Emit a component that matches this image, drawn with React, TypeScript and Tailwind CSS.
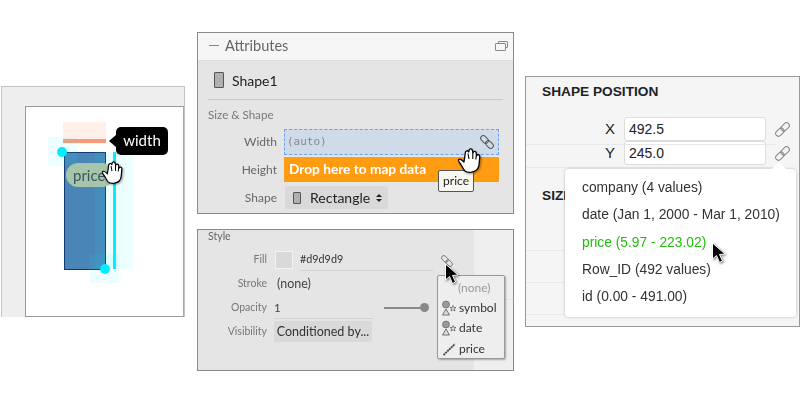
function Hand({ className }: { className: string }) {
  return (
    <svg viewBox="0 0 24 26" className={className}>
      <path
        d="M7 15C5 13 3 11.500 1.700 12.500C.8 13.500 2 15 3.500 17C5 19 6 22 8 24C9.500 25.300 12 25.500 14.500 25.200C18.500 24.500 21.500 22 22 18L22.800 9.500C22.800 7.500 20 7 19.500 9L19.200 6C19 3.800 16.300 3.800 16 5.800L15.400 3.400C14.800 1.200 12 1.500 12 3.800L11.800 5C11 3 8.300 3.500 8.300 6Z"
        fill="#fff"
        stroke="#000"
        strokeWidth="1.300"
        strokeLinejoin="round"
      />
      <path d="M11 6.500L12 12M15.800 5.500L15.800 12M19.300 8.500L18.800 12.500" stroke="#000" strokeWidth="1.100" fill="none" />
    </svg>
  );
}

function Arrow({ className }: { className: string }) {
  return (
    <svg viewBox="0 0 16 22" className={className}>
      <path d="M1.500 1L1.500 17L5.500 13.500L8.500 20.500L11.500 19L8.500 12.500L14 12Z" fill="#000" stroke="#fff" strokeWidth="1" />
    </svg>
  );
}

// flip = chain leaning the other way
function Chain({ flip, color, className }: { flip?: boolean; color: string; className: string }) {
  return (
    <svg viewBox="0 0 16 16" className={className}>
      <g transform={flip ? "rotate(-45 8 8)" : "rotate(45 8 8)"} fill="none" stroke={color} strokeWidth="1.100">
        <rect x="-1" y="5" width="10" height="6" rx="3" />
        <rect x="7" y="5" width="10" height="6" rx="3" />
      </g>
    </svg>
  );
}

function ShapeIcon({ className }: { className: string }) {
  return <div className={`bg-[#b0b0b0] border border-[#555] rounded-[1px] ${className}`}></div>;
}

function DimIcon() {
  return (
    <svg viewBox="0 0 16 16" className="w-[16px] h-[16px] shrink-0">
      <circle cx="5" cy="4.500" r="3.500" fill="#999" stroke="#666" strokeWidth=".7" />
      <path d="M5 9L8.500 15H1.500Z" fill="#ddd" stroke="#555" strokeWidth=".8" />
      <path d="M12 5.500L12.800 7.500H15L13.300 8.800L14 11L12 9.700L10 11L10.700 8.800L9 7.500H11.200Z" fill="#eee" stroke="#555" strokeWidth=".7" />
    </svg>
  );
}

function MeasureIcon() {
  return (
    <svg viewBox="0 0 16 16" className="w-[16px] h-[16px] shrink-0">
      <path d="M2.500 14L14 3" stroke="#444" strokeWidth="1.800" strokeDasharray="2 .6" fill="none" />
    </svg>
  );
}

function CanvasPanel() {
  return (
    <div className="ml-px mt-[86px] w-[184px] h-[231px] bg-[#eeeeee] border-t border-l border-r border-[#c4c4c4] pl-[23px] pt-[19px] font-['Lato',sans-serif]">
      <div className="relative w-full h-[211px] bg-white border border-[#999] border-r-[#aaa] blur-[0.4px]">
        {/* offsets below are relative to (25,106) in the picture */}
        <div className="absolute left-[37px] top-[15px] w-[43px] h-[22px] bg-[#fff0ea]"></div>
        <div className="absolute left-[37px] top-[32px] w-[43px] h-[4px] bg-[#f99a78]"></div>
        <div className="absolute left-[38px] top-[45px] w-[42px] h-[118px] bg-[#4a85b8] border border-[#123a70]"></div>
        <div className="absolute left-[69px] top-[45px] w-[38px] h-[117px] bg-[#00f0ff]/[0.07]"></div>
        <div className="absolute left-[22px] top-[30px] w-[29px] h-[29px] bg-[#00f0ff]/[0.07]"></div>
        <div className="absolute left-[64px] top-[147px] w-[29px] h-[29px] bg-[#00f0ff]/[0.07]"></div>
        <div className="absolute left-[40px] top-[56px] w-[48px] h-[24px] rounded-full bg-[#a6c6ac] text-[#3d5360] text-[15px] leading-[24px] pl-[7px] overflow-hidden">price</div>
        <div className="absolute left-[87px] top-[45px] w-[3px] h-[117px] bg-[#00f0ff]"></div>
        <div className="absolute left-[31px] top-[40px] w-[10px] h-[10px] rounded-full bg-[#00eeff]"></div>
        <div className="absolute left-[74px] top-[157px] w-[10px] h-[10px] rounded-full bg-[#00eeff]"></div>
        <div className="absolute left-[90px] top-[20px] w-[52px] h-[28px] rounded-[5px] bg-black text-white text-[15px] leading-[27px] text-center">
          width
          <div className="absolute left-[-7px] top-[8px] w-0 h-0 border-y-[6px] border-y-transparent border-r-[7px] border-r-black"></div>
        </div>
        <Hand className="absolute left-[75px] top-[53px] w-[22px] h-[24px] drop-shadow-[1px_1px_1px_rgba(0,0,0,0.4)]" />
      </div>
    </div>
  );
}

function AttributesPanel() {
  return (
    <div className="relative w-[317px] h-[182px] bg-[#e5e5e5] border border-[#8a8a8a] font-['Lato',sans-serif] blur-[0.3px]">
      <div className="flex items-center h-[28px] bg-[#f6f6f6] border-b border-[#dddddd] pl-[11px] pr-[4px] pb-[2px] text-[#666]">
        <div className="w-[10px] h-px bg-[#888]"></div>
        <span className="ml-[6px] text-[14.500px]">Attributes</span>
        <div className="relative ml-auto mr-[1px] w-[13px] h-[10px]">
          <div className="absolute right-0 top-0 w-[10px] h-[7px] border border-[#888] rounded-[1px]"></div>
          <div className="absolute left-0 bottom-0 w-[11px] h-[8px] border border-[#888] bg-[#f6f6f6] rounded-[1px]"></div>
        </div>
      </div>
      <div className="flex items-center h-[38px] pl-[16px]">
        <ShapeIcon className="w-[10px] h-[16px]" />
        <span className="ml-[8px] text-[14px] text-[#222]">Shape1</span>
      </div>
      <div className="mx-[10px] h-px bg-[#c8c8c8]"></div>
      <div className="flex items-center h-[29px] pl-[10px] text-[11.600px] text-[#777]">Size &amp; Shape</div>
      <div className="flex items-center h-[26px]">
        <div className="w-[79px] text-right text-[12px] text-[#666]">Width</div>
        <div className="flex items-center ml-[7px] w-[215px] h-full bg-[#cfdbe8] border border-dashed border-[#6aa2f2] pl-[2px]">
          <span className="font-['DejaVu_Sans_Mono',monospace] text-[11px] text-[#888]">(auto)</span>
          <Chain color="#555" className="ml-auto mr-[4px] w-[14px] h-[14px]" />
        </div>
      </div>
      <div className="flex items-center h-[25px] mt-[2px]">
        <div className="w-[79px] text-right text-[12px] text-[#666]">Height</div>
        <div className="flex items-center ml-[7px] w-[215px] h-full bg-[#ff9c12] pl-[5px] text-[13.700px] font-bold text-white">Drop here to map data</div>
      </div>
      <div className="flex items-center h-[23px] mt-[4px]">
        <div className="w-[79px] text-right text-[12px] text-[#666]">Shape</div>
        <div className="flex items-center ml-[8px] w-[103px] h-full bg-[#d9d9d9] rounded-[2px] pl-[8px] text-[14px] text-[#222]">
          <ShapeIcon className="w-[8px] h-[12px]" />
          <span className="ml-[9px]">Rectangle</span>
          <div className="ml-[6px] flex flex-col gap-[2px]">
            <div className="w-0 h-0 border-x-[3px] border-x-transparent border-b-[3px] border-b-[#222]"></div>
            <div className="w-0 h-0 border-x-[3px] border-x-transparent border-t-[3px] border-t-[#222]"></div>
          </div>
        </div>
      </div>
      <div className="absolute left-[240px] top-[137px] w-[36px] h-[22px] bg-[#f8f8f0] border border-[#555] rounded-[2px] text-[12px] leading-[19px] text-center text-[#222]">price</div>
      <Hand className="absolute left-[259px] top-[114px] w-[24px] h-[26px] drop-shadow-[1px_1px_1px_rgba(0,0,0,0.4)]" />
    </div>
  );
}

function StylePanel() {
  return (
    <div className="relative flex w-[317px] h-[142px] bg-[#efefef] border border-[#8a8a8a] font-['Lato',sans-serif] blur-[0.3px]">
      <div className="w-[276px] h-full bg-[#e5e5e5]">
        <div className="flex items-center h-[14px] pl-[10px] text-[10.500px] text-[#666]">Style</div>
        <div className="flex items-center h-[24px] mt-[4px]">
          <div className="w-[69px] text-right text-[10.500px] text-[#777]">Fill</div>
          <div className="ml-[8px] w-[18px] h-[18px] bg-[#d9d9d9] border border-[#f4f4f4]"></div>
          <div className="ml-[7px] w-[133px] h-[22px] border-b border-[#d2d2d2] text-[10.800px] leading-[20px] text-[#333]">#d9d9d9</div>
        </div>
        <div className="flex items-center h-[24px]">
          <div className="w-[69px] text-right text-[10.500px] text-[#777]">Stroke</div>
          <div className="ml-[10px] text-[12.500px] text-[#444]">(none)</div>
        </div>
        <div className="flex items-center h-[23px]">
          <div className="w-[69px] text-right text-[10.500px] text-[#777]">Opacity</div>
          <div className="ml-[7px] w-[99px] h-[23px] border-b border-[#d2d2d2] text-[11.500px] leading-[23px] text-[#444]">1</div>
          <div className="ml-[11px] w-[36px] h-[2px] bg-[#888]"></div>
          <div className="w-[9px] h-[9px] rounded-full bg-[#888]"></div>
        </div>
        <div className="flex items-center h-[21px] mt-[2px]">
          <div className="w-[69px] text-right text-[10.500px] text-[#777]">Visibility</div>
          <div className="ml-[7px] w-[98px] h-full bg-[#d9d9d9] rounded-[2px] text-[12.500px] leading-[21px] text-center whitespace-nowrap text-[#333]">Conditioned by...</div>
        </div>
      </div>
      <div className="flex-1 pt-[69px]">
        <div className="h-px bg-[#e4e4e4]"></div>
      </div>
      <Chain color="#666" className="absolute left-[243px] top-[25px] w-[12px] h-[12px]" />
      <div className="absolute left-[239px] top-[45px] w-[68px] h-[84px] bg-[#eeeeee] border border-[#999] rounded-[2px] shadow-[1px_1px_2px_rgba(0,0,0,0.3)] text-[12px] text-[#333]">
        <div className="flex items-center h-[19px] mt-[2px] pl-[20px] text-[#999]">(none)</div>
        <div className="flex items-center gap-[2px] h-[21px] pl-[3px]"><DimIcon />symbol</div>
        <div className="flex items-center gap-[2px] h-[20px] pl-[3px]"><DimIcon />date</div>
        <div className="flex items-center gap-[2px] h-[21px] pl-[3px]"><MeasureIcon />price</div>
      </div>
      <Arrow className="absolute left-[246px] top-[33px] w-[16px] h-[22px] drop-shadow-[1px_1px_1px_rgba(0,0,0,0.5)]" />
    </div>
  );
}

const fields = [
  { text: "company (4 values)", color: "text-[#333]" },
  { text: "date (Jan 1, 2000 - Mar 1, 2010)", color: "text-[#333]" },
  { text: "price (5.97 - 223.02)", color: "text-[#1fbf0a]" },
  { text: "Row_ID (492 values)", color: "text-[#333]" },
  { text: "id (0.00 - 491.00)", color: "text-[#333]" },
];

function PositionPanel() {
  return (
    <div className="relative w-[275px] h-[251px] bg-[#f5f5f5] border border-[#999] font-['Liberation_Sans',sans-serif] text-[#222] blur-[0.3px]">
      <div className="pl-[16px] pt-[7px] h-[40px] text-[13.700px] leading-[15px] font-bold">SHAPE POSITION</div>
      <div className="flex items-center h-[24px]">
        <div className="w-[90px] pr-px text-right text-[15px]">X</div>
        <div className="ml-[8px] w-[142px] h-full bg-white border border-[#dddddd] rounded-[3px] pl-[4px] text-[14px] leading-[22px]">492.5</div>
        <Chain flip color="#888" className="ml-[9px] w-[15px] h-[15px]" />
      </div>
      <div className="flex items-center h-[24px]">
        <div className="w-[90px] pr-px text-right text-[15px]">Y</div>
        <div className="ml-[8px] w-[142px] h-full bg-white border border-[#dddddd] rounded-[3px] pl-[4px] text-[14px] leading-[22px]">245.0</div>
        <Chain flip color="#888" className="ml-[9px] w-[15px] h-[15px]" />
      </div>
      <div className="pl-[16px] pt-[23px] text-[13.700px] leading-[15px] font-bold">SIZE</div>
      <div className="absolute left-0 top-[67px] w-[250px] h-px bg-[#e8e8e8]"></div>
      <div className="absolute left-0 top-[90px] w-[250px] h-px bg-[#e8e8e8]"></div>
      <div className="absolute left-0 top-[173px] w-[40px] h-px bg-[#e8e8e8]"></div>
      <div className="absolute left-0 top-[205px] w-[40px] h-px bg-[#e8e8e8]"></div>
      <div className="absolute left-0 top-[237px] w-[40px] h-px bg-[#e8e8e8]"></div>
      <div className="absolute left-[39px] top-[92px] w-[231px] h-[148px] bg-white rounded-[4px] shadow-[0_0_3px_rgba(0,0,0,0.25)] pt-[5px] pl-[17px] text-[13.800px]">
        <div className="absolute left-[209px] top-[-5px] w-[10px] h-[10px] bg-white rotate-45"></div>
        {fields.map((f) => (
          <div key={f.text} className={`h-[27.300px] leading-[27px] ${f.color}`}>{f.text}</div>
        ))}
      </div>
      <Arrow className="absolute left-[185px] top-[165px] w-[16px] h-[22px] drop-shadow-[1px_1px_1px_rgba(0,0,0,0.5)]" />
    </div>
  );
}

export default function App() {
  return (
    <div className="flex items-start w-[800px] h-[402px] bg-white overflow-hidden">
      <CanvasPanel />
      <div className="ml-[12px] mt-[32px] flex flex-col gap-[15px]">
        <AttributesPanel />
        <StylePanel />
      </div>
      <div className="ml-[11px] mt-[76px]">
        <PositionPanel />
      </div>
    </div>
  );
}
